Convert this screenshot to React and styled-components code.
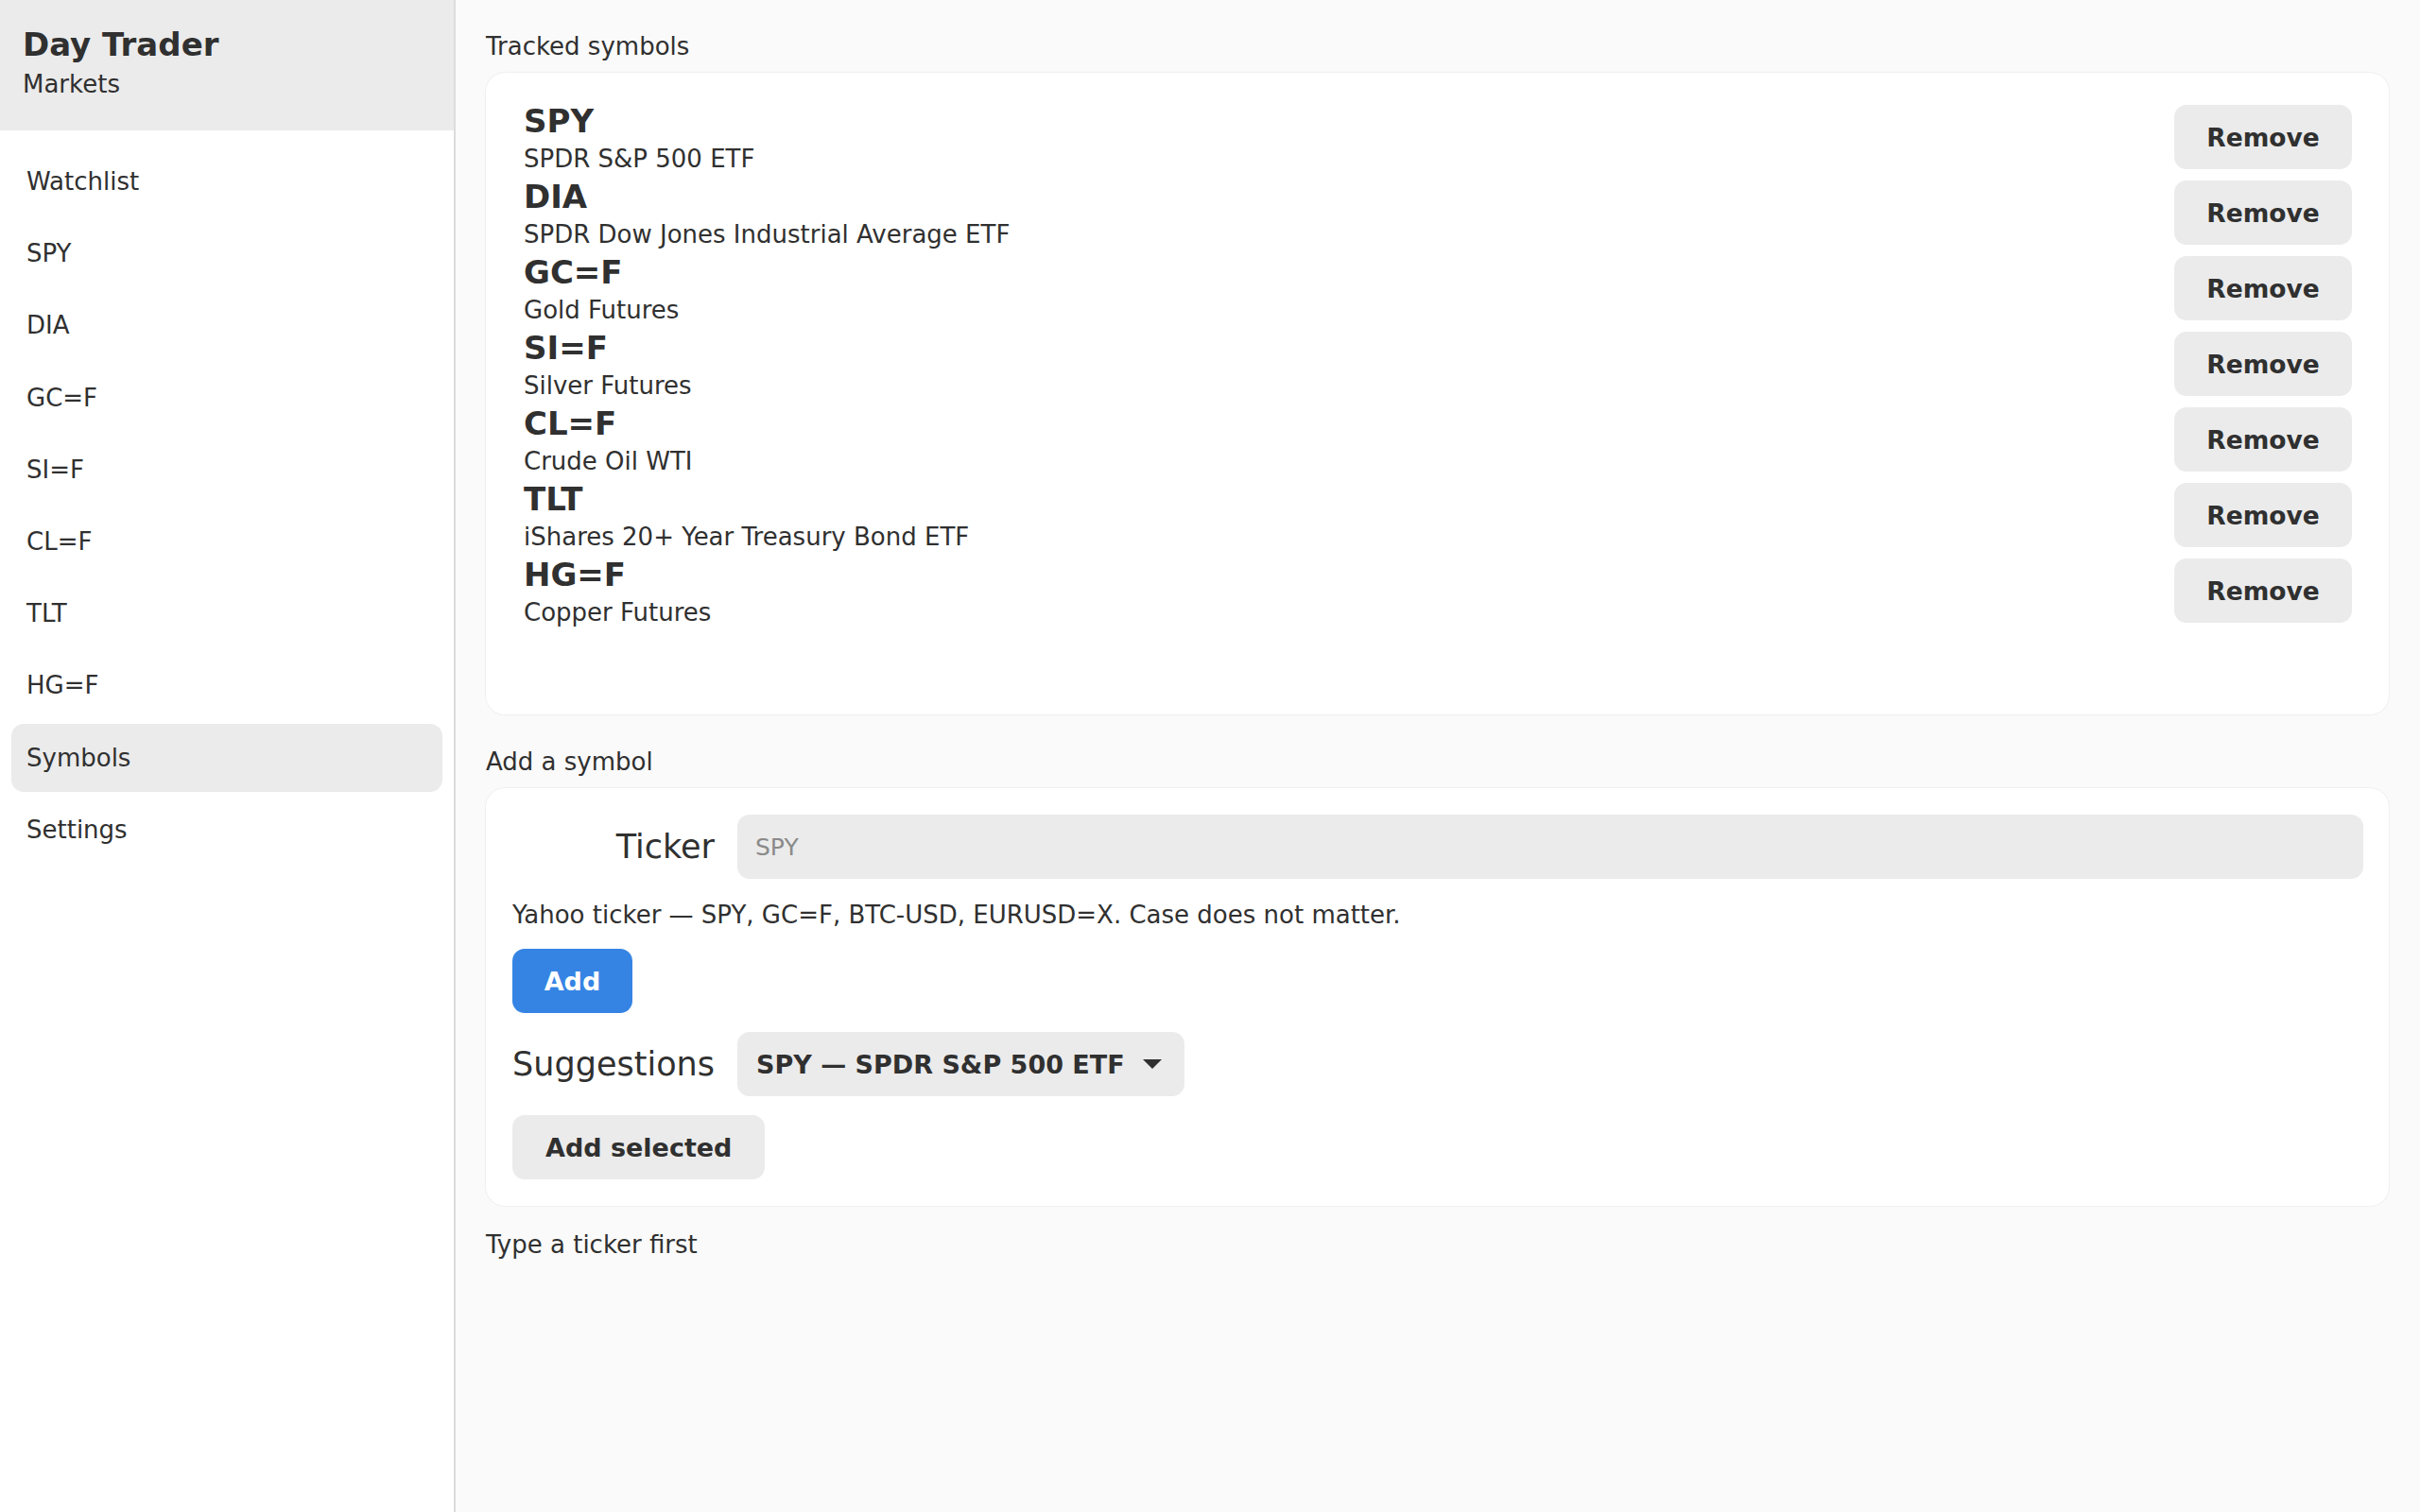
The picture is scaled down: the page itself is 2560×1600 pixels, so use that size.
import React from 'react'
import styled, { createGlobalStyle } from 'styled-components'

const GlobalStyle = createGlobalStyle`
  html, body {
    margin: 0;
    padding: 0;
  }
  body {
    font-family: "DejaVu Sans", "Liberation Sans", sans-serif;
    color: #303030;
    background: #fafafa;
  }
  * {
    box-sizing: border-box;
  }
`

const Shell = styled.div`
  display: flex;
  min-height: 100vh;
`

const Sidebar = styled.aside`
  flex: 0 0 482px;
  display: flex;
  flex-direction: column;
  background: #ffffff;
  border-right: 2px solid #dcdcdc;
`

const SidebarHeader = styled.header`
  height: 138px;
  padding: 27px 24px 0;
  background: #ebebeb;
`

const AppTitle = styled.div`
  font-size: 34px;
  font-weight: 700;
  line-height: 40px;
`

const AppSubtitle = styled.div`
  margin-top: 7px;
  font-size: 26px;
  line-height: 30px;
`

const Nav = styled.nav`
  display: flex;
  flex-direction: column;
  gap: 4.2px;
  padding: 18px 12px;
`

const NavItem = styled.div`
  display: flex;
  align-items: center;
  height: 72px;
  padding-left: 16px;
  border-radius: 13px;
  font-size: 26px;
  background: ${p => (p.$active ? '#ebebeb' : 'transparent')};
`

const Main = styled.main`
  flex: 1;
  display: flex;
  flex-direction: column;
  padding: 34px 33px 33px 32px;
`

const SectionLabel = styled.div`
  font-size: 26px;
  line-height: 31px;
  margin-top: ${p => p.$gap || 0}px;
  margin-bottom: 12px;
`

const Card = styled.section`
  background: #ffffff;
  border-radius: 20px;
  box-shadow: 0 0 0 1px rgba(0, 0, 0, 0.02), 0 0 2px rgba(0, 0, 0, 0.08);
`

const ListCard = styled(Card)`
  padding: 31px 39px 88px 40px;
`

const SymbolRow = styled.div`
  display: flex;
  align-items: flex-start;
  justify-content: space-between;
  height: 80px;
`

const SymbolInfo = styled.div`
  display: flex;
  flex-direction: column;
`

const SymbolCode = styled.div`
  font-size: 34px;
  font-weight: 700;
  line-height: 41px;
`

const SymbolName = styled.div`
  font-size: 26px;
  line-height: 39px;
`

const Button = styled.button`
  height: 68px;
  padding: 0 35px;
  border: none;
  border-radius: 13px;
  font-family: inherit;
  font-size: 27px;
  font-weight: 700;
  color: ${p => (p.$primary ? '#ffffff' : '#303030')};
  background: ${p => (p.$primary ? '#3584e4' : '#ebebeb')};
  cursor: pointer;
`

const RemoveButton = styled(Button)`
  width: 188px;
  margin-top: 3px;
  padding: 0;
  font-size: 26.5px;
`

const FormCard = styled(Card)`
  display: flex;
  flex-direction: column;
  align-items: flex-start;
  padding: 28px 27px 28px 28px;
`

const FieldRow = styled.div`
  display: flex;
  align-items: center;
  gap: 24px;
  width: 100%;
  margin-top: ${p => p.$gap || 0}px;
`

const FieldLabel = styled.label`
  flex: 0 0 214px;
  text-align: right;
  font-size: 35px;
`

const TickerInput = styled.input`
  flex: 1;
  height: 68px;
  padding: 0 19px;
  border: none;
  border-radius: 13px;
  background: #ebebeb;
  font-family: inherit;
  font-size: 25px;
  color: #303030;
  outline: none;

  &::placeholder {
    color: #8a8a8a;
  }
`

const Hint = styled.div`
  margin-top: 21px;
  font-size: 26px;
  line-height: 34px;
`

const Spaced = styled.div`
  margin-top: ${p => p.$gap || 20}px;
`

const AddButton = styled(Button)`
  width: 127px;
  padding: 0;
`

const Dropdown = styled.button`
  display: inline-flex;
  align-items: center;
  gap: 18px;
  height: 68px;
  padding: 0 23px 0 20px;
  border: none;
  border-radius: 13px;
  background: #ebebeb;
  font-family: inherit;
  font-size: 27px;
  font-weight: 700;
  color: #303030;
`

const Status = styled.div`
  margin-top: 26px;
  font-size: 26px;
  line-height: 31px;
`

const symbols = [
  { code: 'SPY', name: 'SPDR S&P 500 ETF' },
  { code: 'DIA', name: 'SPDR Dow Jones Industrial Average ETF' },
  { code: 'GC=F', name: 'Gold Futures' },
  { code: 'SI=F', name: 'Silver Futures' },
  { code: 'CL=F', name: 'Crude Oil WTI' },
  { code: 'TLT', name: 'iShares 20+ Year Treasury Bond ETF' },
  { code: 'HG=F', name: 'Copper Futures' }
]

const navItems = ['Watchlist', ...symbols.map(s => s.code), 'Symbols', 'Settings']

const Caret = () => (
  <svg width="22" height="12" viewBox="0 0 22 12">
    <path d="M1 1 L21 1 L11 11 Z" fill="#303030" />
  </svg>
)

export default function App() {
  return (
    <Shell>
      <GlobalStyle />
      <Sidebar>
        <SidebarHeader>
          <AppTitle>Day Trader</AppTitle>
          <AppSubtitle>Markets</AppSubtitle>
        </SidebarHeader>
        <Nav>
          {navItems.map(item => (
            <NavItem key={item} $active={item === 'Symbols'}>
              {item}
            </NavItem>
          ))}
        </Nav>
      </Sidebar>

      <Main>
        <SectionLabel>Tracked symbols</SectionLabel>
        <ListCard>
          {symbols.map(s => (
            <SymbolRow key={s.code}>
              <SymbolInfo>
                <SymbolCode>{s.code}</SymbolCode>
                <SymbolName>{s.name}</SymbolName>
              </SymbolInfo>
              <RemoveButton>Remove</RemoveButton>
            </SymbolRow>
          ))}
        </ListCard>

        <SectionLabel $gap={35}>Add a symbol</SectionLabel>
        <FormCard>
          <FieldRow>
            <FieldLabel htmlFor="ticker">Ticker</FieldLabel>
            <TickerInput id="ticker" placeholder="SPY" />
          </FieldRow>
          <Hint>Yahoo ticker — SPY, GC=F, BTC-USD, EURUSD=X. Case does not matter.</Hint>
          <Spaced $gap={19}>
            <AddButton $primary>Add</AddButton>
          </Spaced>
          <FieldRow $gap={20}>
            <FieldLabel>Suggestions</FieldLabel>
            <Dropdown>
              SPY — SPDR S&amp;P 500 ETF
              <Caret />
            </Dropdown>
          </FieldRow>
          <Spaced>
            <Button>Add selected</Button>
          </Spaced>
        </FormCard>
        <Status>Type a ticker first</Status>
      </Main>
    </Shell>
  )
}
